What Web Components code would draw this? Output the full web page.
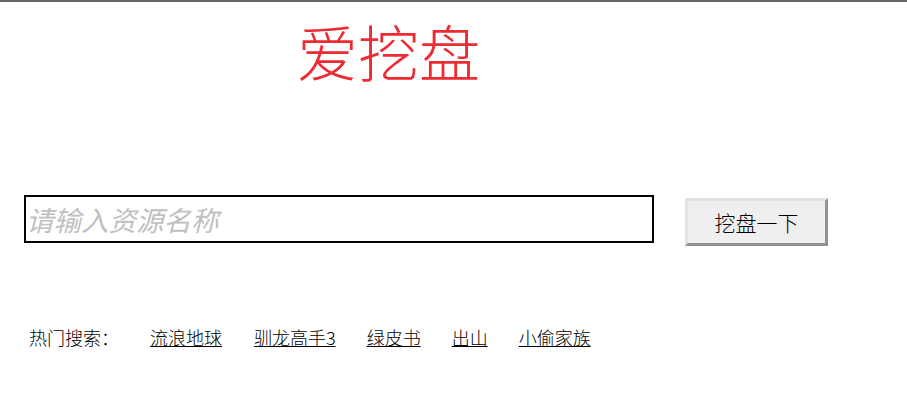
<!DOCTYPE html>
<html lang="zh">
<head>
<meta charset="utf-8">
<title>爱挖盘</title>
<style>
html, body { margin: 0; padding: 0; background: #fff; }
body { font-family: "Noto Sans CJK SC", "Liberation Sans", sans-serif; }
</style>
</head>
<body>
<search-page>
  <site-logo slot="logo">爱挖盘</site-logo>
  <search-box slot="search"></search-box>
  <hot-list slot="hot">
    <a href="#">流浪地球</a>
    <a href="#">驯龙高手3</a>
    <a href="#">绿皮书</a>
    <a href="#">出山</a>
    <a href="#">小偷家族</a>
  </hot-list>
</search-page>

<script>
class SearchPage extends HTMLElement {
  constructor() {
    super()
    this.attachShadow({ mode: 'open' }).innerHTML = `
<style>
:host {
  display: flex;
  flex-direction: column;
  height: 415px;
  box-sizing: border-box;
  border-top: 2px solid #666;
}
.logo { height: 193px; }
.search { height: 128px; }
</style>
<div class="logo"><slot name="logo"></slot></div>
<div class="search"><slot name="search"></slot></div>
<div><slot name="hot"></slot></div>
`
  }
}

class SiteLogo extends HTMLElement {
  constructor() {
    super()
    this.attachShadow({ mode: 'open' }).innerHTML = `
<style>
:host {
  display: block;
  padding: 9px 0 0 297px;
  color: #ee2b33;
  font: 300 61px/80px "Noto Sans CJK SC", sans-serif;
}
</style>
<slot></slot>
`
  }
}

class SearchBox extends HTMLElement {
  constructor() {
    super()
    this.attachShadow({ mode: 'open' }).innerHTML = `
<style>
:host {
  display: flex;
  align-items: flex-start;
  gap: 31px;
  padding-left: 24px;
}
input {
  width: 630px;
  height: 48px;
  box-sizing: border-box;
  margin: 0;
  padding: 0;
  border: 2px solid #000;
  outline: none;
  font: italic 400 27.5px "Noto Sans CJK SC", sans-serif;
}
input::placeholder { color: #c0c0c0; }
button {
  width: 143px;
  height: 48px;
  box-sizing: border-box;
  margin: 3px 0 0;
  padding: 0;
  border: 3px solid;
  border-color: #e2e2e2 #929292 #929292 #e2e2e2;
  background: #efefef;
  color: #000;
  font: 300 21px "Noto Sans CJK SC", sans-serif;
}
</style>
<input type="text" placeholder="请输入资源名称">
<button type="button">挖盘一下</button>
`
  }
}

class HotList extends HTMLElement {
  constructor() {
    super()
    this.attachShadow({ mode: 'open' }).innerHTML = `
<style>
:host {
  display: flex;
  align-items: center;
  padding-left: 29px;
  font: 300 18px/28px "Noto Sans CJK SC", sans-serif;
  color: #000;
}
.label { width: 121px; }
.links { display: flex; gap: 31px; }
::slotted(a) { color: #000; text-decoration: underline; }
::slotted(a:first-child) { margin-right: 1px; }
</style>
<span class="label">热门搜索：</span>
<div class="links"><slot></slot></div>
`
  }
}

customElements.define('search-page', SearchPage)
customElements.define('site-logo', SiteLogo)
customElements.define('search-box', SearchBox)
customElements.define('hot-list', HotList)
</script>
</body>
</html>
